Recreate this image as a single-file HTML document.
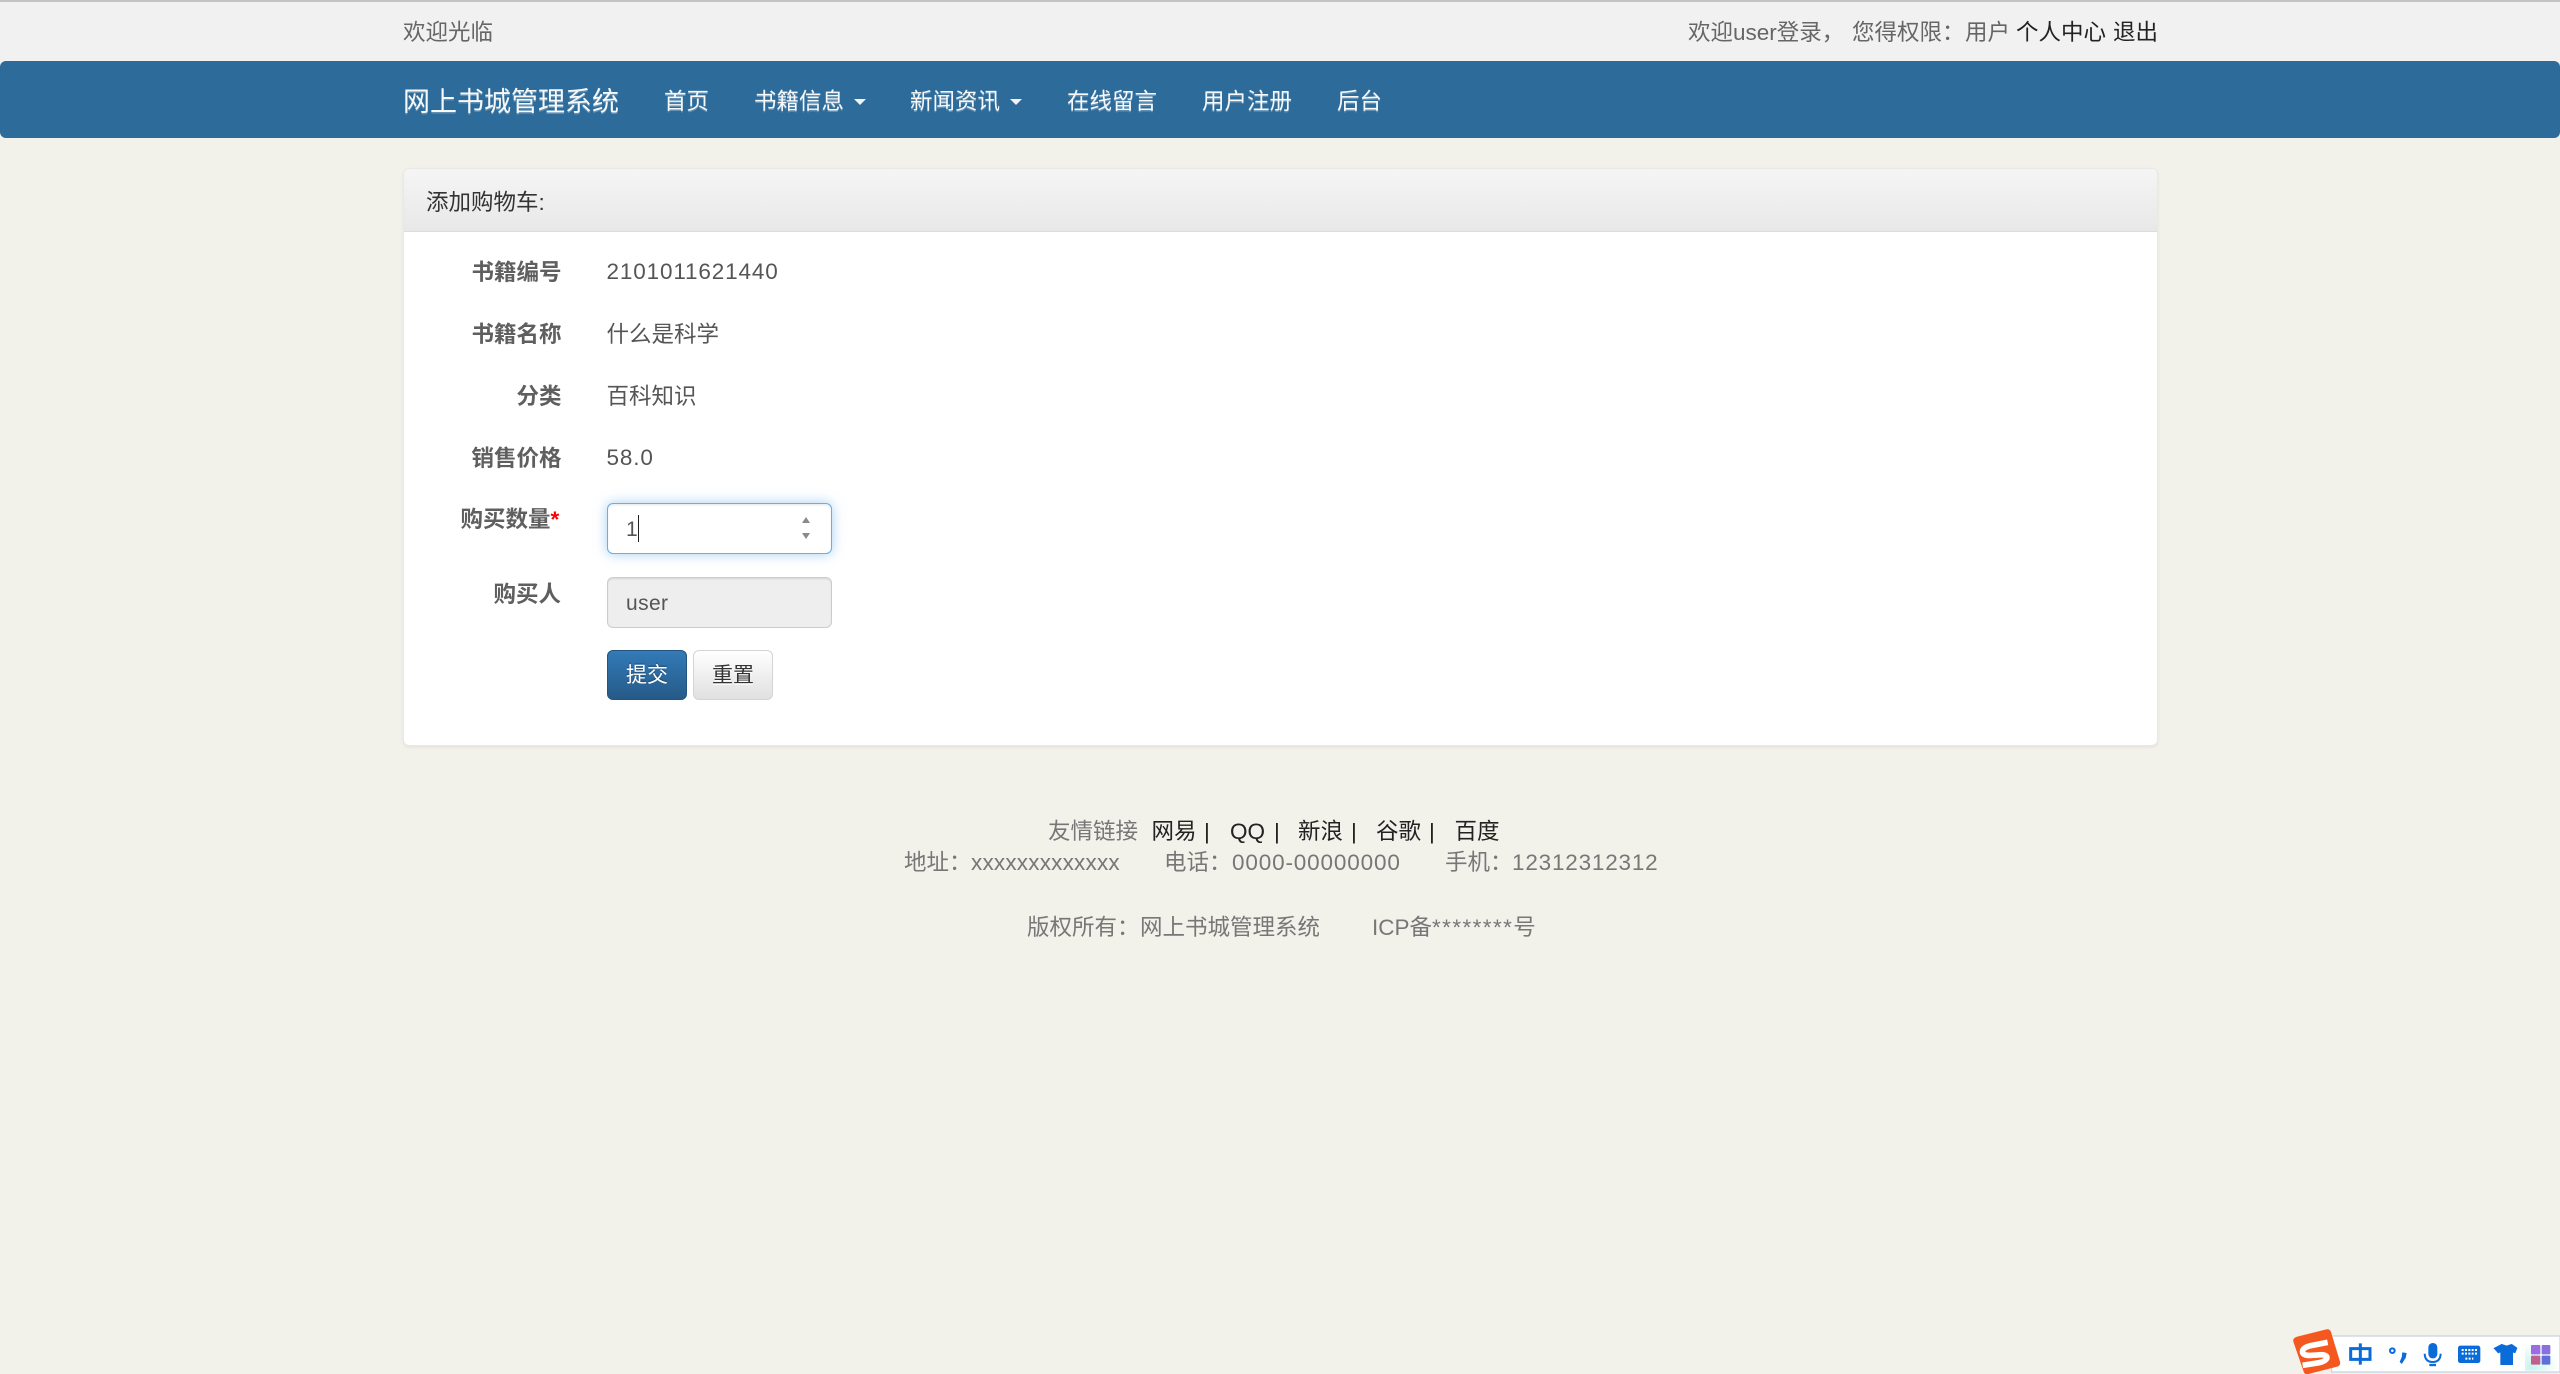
<!DOCTYPE html>
<html lang="zh">
<head>
<meta charset="utf-8">
<title>网上书城管理系统</title>
<style>
html,body{margin:0;padding:0;width:2560px;height:1374px;overflow:hidden;background:#f2f1ea;font-family:"Liberation Sans","Noto Sans CJK SC",sans-serif;font-size:22.5px;color:#555}
.t{position:absolute;white-space:nowrap;line-height:40px;height:40px}
.box{position:absolute;box-sizing:border-box}
#top{left:0;top:0;width:2560px;height:61px;background:#f1f1f1;border-top:2px solid #c4c4c4}
#nav{left:0;top:61px;width:2560px;height:77px;background:#2d6b9a;border-radius:6px}
.n{color:#f6f8fa;text-shadow:0 1.5px 0 rgba(255,255,255,.25)}
.car{position:absolute;width:0;height:0;border-left:6px solid transparent;border-right:6px solid transparent;border-top:6px solid #f2f2f2;top:99px}
#panel{left:403px;top:168px;width:1755px;height:578px;background:#fff;border:1.5px solid #e8e8e4;border-radius:6px;box-shadow:0 1.5px 3px rgba(0,0,0,.06)}
#head{left:404px;top:169px;width:1753px;height:63px;background:linear-gradient(#f5f5f5,#e8e8e8);border-bottom:1.5px solid #ddd;border-radius:5px 5px 0 0}
.l{font-weight:bold;color:#5f5f5f}
.v{color:#555;letter-spacing:.85px}
.a{color:#222}
.f{color:#777}
</style>
</head>
<body>
<div class="box" id="top"></div>
<div class="t f" style="left:403px;top:13px;color:#666">欢迎光临</div>
<div class="t f" style="left:1688px;top:13px;color:#666">欢迎user登录，</div>
<div class="t f" style="left:1852px;top:13px;color:#666">您得权限：</div>
<div class="t f" style="left:1965px;top:13px;color:#666">用户</div>
<div class="t a" style="left:2016px;top:13px">个人中心</div>
<div class="t a" style="left:2113px;top:13px">退出</div>

<div class="box" id="nav"></div>
<div class="t n" style="left:403px;top:82px;font-size:27px">网上书城管理系统</div>
<div class="t n" style="left:664px;top:82px">首页</div>
<div class="t n" style="left:754px;top:82px">书籍信息</div>
<div class="car" style="left:854px"></div>
<div class="t n" style="left:910px;top:82px">新闻资讯</div>
<div class="car" style="left:1010px"></div>
<div class="t n" style="left:1067px;top:82px">在线留言</div>
<div class="t n" style="left:1202px;top:82px">用户注册</div>
<div class="t n" style="left:1337px;top:82px">后台</div>

<div class="box" id="panel"></div>
<div class="box" id="head"></div>
<div class="t" style="left:426px;top:183px;color:#333">添加购物车:</div>

<div class="t l" style="left:471.5px;top:253px">书籍编号</div>
<div class="t v" style="left:606.5px;top:252px">2101011621440</div>
<div class="t l" style="left:471.5px;top:315px">书籍名称</div>
<div class="t" style="left:606.5px;top:315px">什么是科学</div>
<div class="t l" style="left:516.5px;top:377px">分类</div>
<div class="t" style="left:606.5px;top:377px">百科知识</div>
<div class="t l" style="left:471.5px;top:439px">销售价格</div>
<div class="t v" style="left:606.5px;top:438px">58.0</div>

<div class="t l" style="left:460.5px;top:500px">购买数量<span style="color:#f00">*</span></div>
<div class="box" style="left:607px;top:503px;width:225px;height:51px;background:#fff;border:1.5px solid #66afe9;border-radius:6px;box-shadow:inset 0 1.5px 1.5px rgba(0,0,0,.075),0 0 12px rgba(102,175,233,.6)"></div>
<div class="t" style="left:626px;top:510px;font-size:21px">1</div>
<div class="box" style="left:638px;top:515px;width:1px;height:27px;background:#222"></div>
<svg style="position:absolute;left:798px;top:515px" width="16" height="26" viewBox="0 0 16 26"><path d="M8 2 12 8H4z M4 18H12L8 24z" fill="#8a8a8a"/></svg>

<div class="t l" style="left:493.5px;top:575px">购买人</div>
<div class="box" style="left:607px;top:577px;width:225px;height:51px;background:#eee;border:1.5px solid #ccc;border-radius:6px;box-shadow:inset 0 1.5px 1.5px rgba(0,0,0,.075)"></div>
<div class="t" style="left:626px;top:584px;font-size:21px;letter-spacing:.4px">user</div>

<div class="box" style="left:607px;top:650px;width:80px;height:50px;background:linear-gradient(#337ab7,#265a88);border:1.5px solid #245580;border-radius:6px"></div>
<div class="t" style="left:626px;top:656px;font-size:21px;color:#fff;text-shadow:0 -1.5px 0 rgba(0,0,0,.2)">提交</div>
<div class="box" style="left:693px;top:650px;width:80px;height:50px;background:linear-gradient(#fff,#e0e0e0);border:1.5px solid #d4d4d4;border-radius:6px"></div>
<div class="t" style="left:712px;top:656px;font-size:21px;color:#333;text-shadow:0 1.5px 0 #fff">重置</div>

<div class="t f" style="left:1048px;top:812px">友情链接</div>
<div class="t a" style="left:1151.5px;top:812px">网易</div>
<div class="t a" style="left:1204px;top:812px">|</div>
<div class="t a" style="left:1230px;top:812px">QQ</div>
<div class="t a" style="left:1274px;top:812px">|</div>
<div class="t a" style="left:1298px;top:812px">新浪</div>
<div class="t a" style="left:1351px;top:812px">|</div>
<div class="t a" style="left:1376px;top:812px">谷歌</div>
<div class="t a" style="left:1429px;top:812px">|</div>
<div class="t a" style="left:1454.5px;top:812px">百度</div>

<div class="t f" style="left:904px;top:843px">地址：</div>
<div class="t f" style="left:971px;top:843px;letter-spacing:.2px">xxxxxxxxxxxxx</div>
<div class="t f" style="left:1164px;top:843px">电话：</div>
<div class="t f" style="left:1232px;top:843px;letter-spacing:.85px">0000-00000000</div>
<div class="t f" style="left:1445px;top:843px">手机：</div>
<div class="t f" style="left:1512px;top:843px;letter-spacing:.8px">12312312312</div>

<div class="t f" style="left:1027px;top:908px">版权所有：</div>
<div class="t f" style="left:1140px;top:908px">网上书城管理系统</div>
<div class="t f" style="left:1372px;top:908px">ICP备<span style="letter-spacing:1.4px">********</span>号</div>

<svg style="position:absolute;left:2280px;top:1320px" width="280" height="54" viewBox="0 0 840 162">
  <defs>
    <radialGradient id="gl" cx=".2" cy=".9" r=".8"><stop offset="0" stop-color="#c8f3ee"/><stop offset="1" stop-color="#fff"/></radialGradient>
  </defs>
  <rect x="155" y="48" width="685" height="108" fill="#fff" stroke="#c9d6e4" stroke-width="4"/>
  <rect x="735" y="58" width="100" height="94" fill="url(#gl)"/>
  <path d="M52 50 139 28Q150 26 153 36L180 125Q183 136 172 140L85 162H76Q72 160 70 152L40 65Q37 54 52 50Z" fill="#f4581f"/>
  <path d="M143 67 92 77Q64 84 68 98 72 108 96 106L126 104Q144 106 140 116 136 124 118 128L68 136" fill="none" stroke="#fff" stroke-width="17" stroke-linejoin="round"/>
  <path d="M212 86H270V118H212Z M241 70V134" fill="none" stroke="#0a6cd8" stroke-width="9"/>
  <circle cx="337" cy="92" r="7" fill="none" stroke="#0a6cd8" stroke-width="6"/>
  <path d="M369 100 377 101 375 112 365 128 362 125 368 111Z" fill="#0a6cd8" stroke="#0a6cd8" stroke-width="5"/>
  <rect x="445" y="69" width="27" height="46" rx="13" fill="#0a6cd8"/>
  <path d="M434 101Q435 126 458 126 481 126 482 101" fill="none" stroke="#0a6cd8" stroke-width="6"/>
  <path d="M448 135H468" stroke="#0a6cd8" stroke-width="7"/>
  <rect x="534" y="77" width="67" height="52" rx="7" fill="#0a6cd8"/>
  <path d="M545 90H591M545 101H591M556 116H580" stroke="#fff" stroke-width="6" stroke-dasharray="6 4"/>
  <path d="M665 73 680 78 695 73 711 84 705 99 698 96V134H662V96L655 99 642 85Z" fill="#0a6cd8" stroke="#0a6cd8" stroke-width="2" stroke-linejoin="round"/>
  <rect x="753" y="75" width="28" height="28" rx="3" fill="#9a6ee0"/>
  <rect x="785" y="75" width="26" height="28" rx="3" fill="#8a70dc"/>
  <rect x="753" y="107" width="28" height="27" rx="3" fill="#c0608f"/>
  <rect x="785" y="107" width="26" height="27" rx="3" fill="#5c70d8"/>
</svg>
</body>
</html>
